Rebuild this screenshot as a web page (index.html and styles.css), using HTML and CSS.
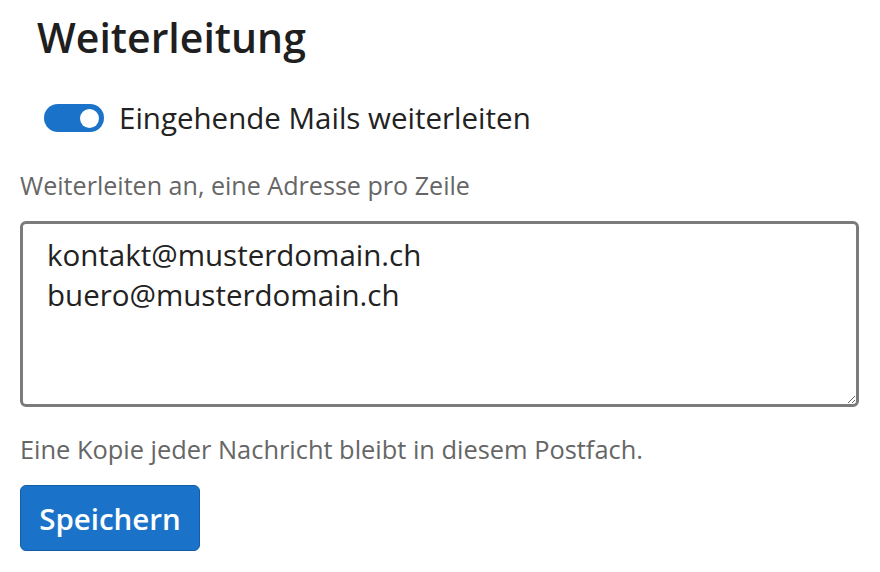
FILE: index.html
```html
<!DOCTYPE html>
<html lang="de">
<head>
  <meta charset="UTF-8" />
  <meta name="viewport" content="width=device-width, initial-scale=1" />
  <title>Weiterleitung</title>
  <link rel="stylesheet" href="styles.css">
</head>
<body>
  <div class="panel">
    <h1 class="title">Weiterleitung</h1>

    <label class="switch-row">
      <span class="switch"><span class="knob"></span></span>
      <span class="switch-label">Eingehende Mails weiterleiten</span>
    </label>

    <div class="field-label">Weiterleiten an, eine Adresse pro Zeile</div>
    <textarea class="addresses">kontakt@musterdomain.ch
buero@musterdomain.ch</textarea>

    <p class="note">Eine Kopie jeder Nachricht bleibt in diesem Postfach.</p>

    <button class="save">Speichern</button>
  </div>
</body>
</html>
```

FILE: styles.css
```css
html, body {
  margin: 0; padding: 0;
  background: #fff;
  color: #222;
  font-family: 'Open Sans', 'Noto Sans', sans-serif;
}
* { box-sizing: border-box; }

.panel {
  padding: 7px 20px 0 20px;
  display: flex;
  flex-direction: column;
  align-items: flex-start;
}

.title {
  margin: 0 0 0 17px;
  font-size: 41px;
  font-weight: 600;
  line-height: 60px;
  color: #1f1f1f;
}

.switch-row {
  display: flex;
  align-items: center;
  gap: 15px;
  margin: 33px 0 0 24px;
}

.switch {
  width: 60px;
  height: 28px;
  border-radius: 14px;
  background: #1a73c9;
  display: flex;
  align-items: center;
  justify-content: flex-end;
  padding-right: 5px;
}
.knob {
  width: 19px;
  height: 19px;
  border-radius: 50%;
  background: #fff;
}

.switch-label {
  font-size: 29.5px;
  line-height: 36px;
  color: #222;
}

.field-label {
  margin-top: 32px;
  font-size: 25.1px;
  line-height: 34px;
  color: #666;
}

.addresses {
  margin-top: 19px;
  width: 839px;
  height: 186px;
  border: 3px solid #7b7b7b;
  border-radius: 6px;
  padding: 11px 24px;
  font-family: inherit;
  font-size: 29.5px;
  line-height: 40px;
  color: #222;
  resize: vertical;
}

.note {
  margin: 25px 0 0 0;
  font-size: 25.4px;
  line-height: 34px;
  color: #666;
}

.save {
  margin-top: 19px;
  width: 180px;
  height: 66px;
  border: 1px solid #125ea6;
  border-radius: 6px;
  background: #1a73c9;
  color: #fff;
  font-family: inherit;
  font-size: 29.5px;
  font-weight: 600;
  cursor: pointer;
}
```
